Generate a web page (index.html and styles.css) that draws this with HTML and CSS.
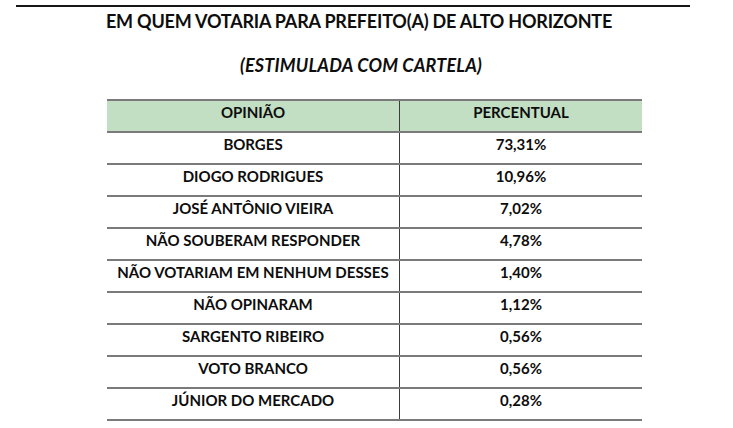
FILE: index.html
```html
<!DOCTYPE html>
<html lang="pt">
<head>
<meta charset="utf-8">
<title>Pesquisa Alto Horizonte</title>
<link rel="stylesheet" href="styles.css">
</head>
<body>
<div class="rule"></div>
<h1 class="title">EM QUEM VOTARIA PARA PREFEITO(A) DE ALTO HORIZONTE</h1>
<h2 class="subtitle">(ESTIMULADA COM CARTELA)</h2>
<div class="table">
  <div class="row head"><div class="cell">OPINIÃO</div><div class="cell val">PERCENTUAL</div></div>
  <div class="row"><div class="cell">BORGES</div><div class="cell val">73,31%</div></div>
  <div class="row"><div class="cell">DIOGO RODRIGUES</div><div class="cell val">10,96%</div></div>
  <div class="row"><div class="cell">JOSÉ ANTÔNIO VIEIRA</div><div class="cell val">7,02%</div></div>
  <div class="row"><div class="cell">NÃO SOUBERAM RESPONDER</div><div class="cell val">4,78%</div></div>
  <div class="row"><div class="cell">NÃO VOTARIAM EM NENHUM DESSES</div><div class="cell val">1,40%</div></div>
  <div class="row"><div class="cell">NÃO OPINARAM</div><div class="cell val">1,12%</div></div>
  <div class="row"><div class="cell">SARGENTO RIBEIRO</div><div class="cell val">0,56%</div></div>
  <div class="row"><div class="cell">VOTO BRANCO</div><div class="cell val">0,56%</div></div>
  <div class="row last"><div class="cell">JÚNIOR DO MERCADO</div><div class="cell val">0,28%</div></div>
</div>
</body>
</html>
```
FILE: styles.css
```css
html, body {
  margin: 0;
  padding: 0;
  background: #ffffff;
}
body {
  font-family: Lato, "Noto Sans", sans-serif;
  font-weight: 700;
  color: #0d0d0d;
  width: 733px;
  height: 428px;
  overflow: hidden;
}
.rule {
  margin: 5px 0 0 16px;
  width: 674px;
  height: 2px;
  background: #161616;
}
.title {
  margin: 3px 0 0 0;
  padding-right: 15px;
  font-size: 18px;
  line-height: 22px;
  font-weight: 700;
  text-align: center;
  letter-spacing: -0.2px;
}
.subtitle {
  margin: 22px 0 0 0;
  padding-right: 11px;
  font-size: 18px;
  line-height: 22px;
  font-weight: 700;
  font-style: italic;
  text-align: center;
  letter-spacing: 0.2px;
}
.table {
  margin: 23px 0 0 107px;
  width: 535px;
}
.row {
  display: grid;
  grid-template-columns: 292px 243px;
  border-top: 2px solid #7a7a7a;
  height: 30px;
}
.row.last {
  border-bottom: 2px solid #7a7a7a;
}
.row.head {
  background: #c2dfc4;
}
.cell {
  padding-top: 2px;
  font-size: 15px;
  line-height: 18px;
  text-align: center;
}
.cell.val {
  border-left: 1px solid #3c3c3c;
}
```
